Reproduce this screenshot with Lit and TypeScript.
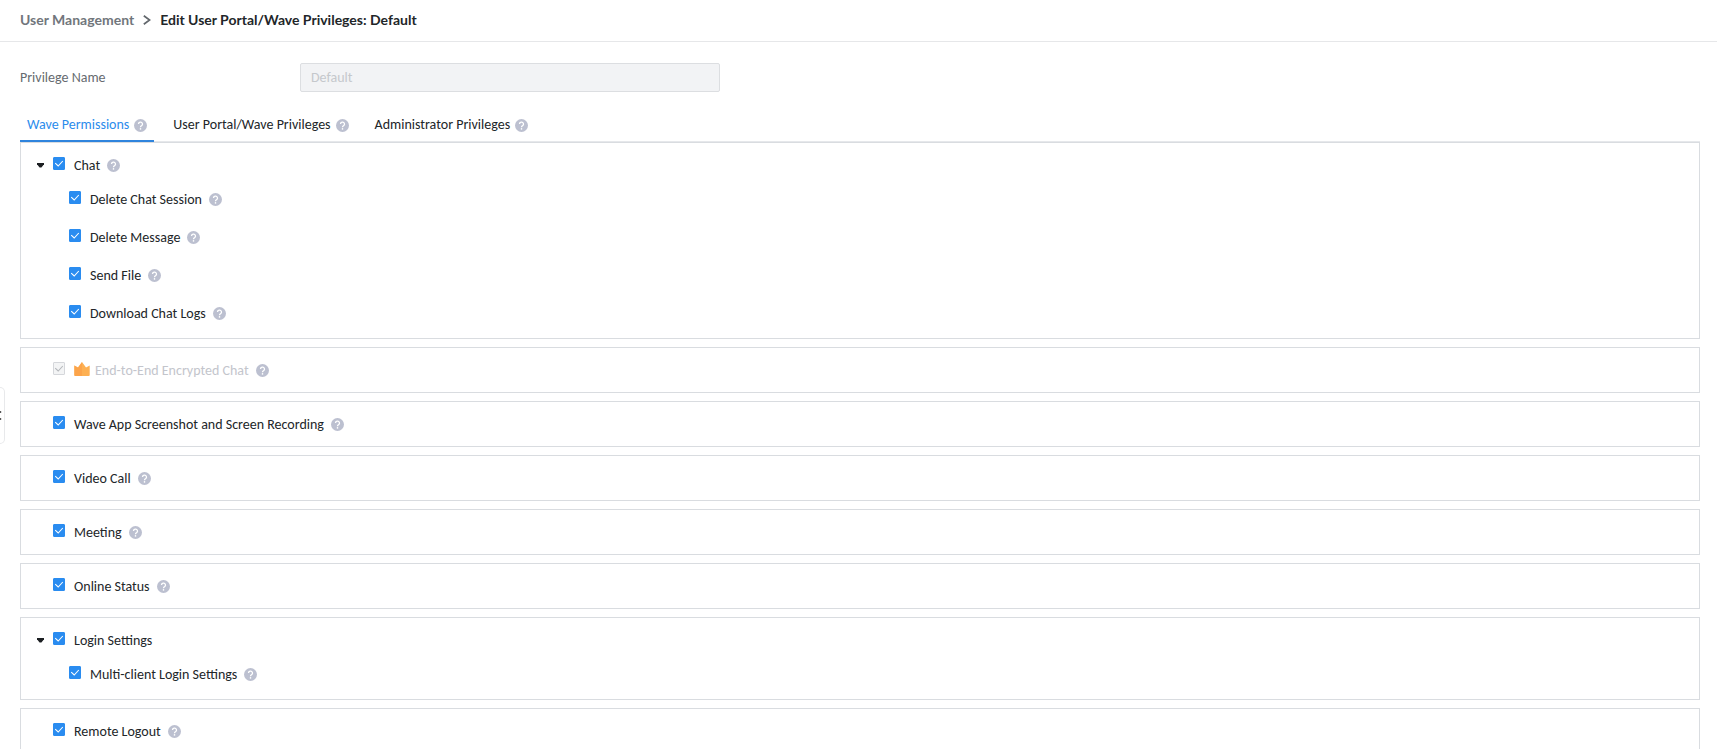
import { LitElement, html, svg, css, nothing } from "lit";
import { customElement, state } from "lit/decorators.js";

interface Permission {
  id: string;
  label: string;
  help?: boolean;
  locked?: boolean;
  children?: Permission[];
}

const PERMISSIONS: Permission[] = [
  {
    id: "chat",
    label: "Chat",
    help: true,
    children: [
      { id: "delete-session", label: "Delete Chat Session", help: true },
      { id: "delete-message", label: "Delete Message", help: true },
      { id: "send-file", label: "Send File", help: true },
      { id: "download-logs", label: "Download Chat Logs", help: true },
    ],
  },
  { id: "e2e", label: "End-to-End Encrypted Chat", help: true, locked: true },
  { id: "screenshot", label: "Wave App Screenshot and Screen Recording", help: true },
  { id: "video", label: "Video Call", help: true },
  { id: "meeting", label: "Meeting", help: true },
  { id: "online", label: "Online Status", help: true },
  {
    id: "login",
    label: "Login Settings",
    children: [{ id: "multi-client", label: "Multi-client Login Settings", help: true }],
  },
  { id: "logout", label: "Remote Logout", help: true },
];

const TABS = ["Wave Permissions", "User Portal/Wave Privileges", "Administrator Privileges"];

const helpIcon = svg`<svg class="help-icon" width="13" height="13" viewBox="0 0 13 13" aria-hidden="true">
  <circle cx="6.5" cy="6.5" r="6.5" fill="#bcc0d0"/>
  <path d="M4.5 5.1a2 2 0 1 1 3 1.7c-.7.4-1 .7-1 1.4" fill="none" stroke="#fff" stroke-width="1.3"/>
  <circle cx="6.5" cy="9.9" r=".8" fill="#fff"/>
</svg>`;

@customElement("app-root")
export class AppRoot extends LitElement {
  @state() private activeTab = 0;
  @state() private closed = new Set<string>();

  static styles = css`
    :host {
      display: block;
      height: 100vh;
      overflow: hidden;
      position: relative;
      background: #fff;
      color: #222629;
      font: 14px/20px Carlito, Lato, "Liberation Sans", sans-serif;
    }
    * { box-sizing: border-box; }
    button {
      border: 0;
      padding: 0;
      background: none;
      font: inherit;
      color: inherit;
      cursor: pointer;
    }
    svg { display: block; }
    .header {
      display: flex;
      align-items: center;
      gap: 9px;
      height: 42px;
      padding: 0 20px 2px;
      border-bottom: 1px solid #e6e7e9;
      font-family: Lato, "Liberation Sans", sans-serif;
      font-weight: 700;
    }
    .crumb { color: #71767c; text-decoration: none; }
    .title { margin: 0; font: inherit; }
    .content { padding: 21px 17px 0 20px; }
    .field { display: flex; align-items: center; }
    .field-label { width: 280px; color: #666b70; }
    .field-input {
      width: 420px;
      height: 29px;
      padding: 0 10px;
      border: 1px solid #dcdee1;
      border-radius: 2px;
      background: #f2f3f5;
      color: #c5c8cc;
      font: inherit;
    }
    .tabs {
      display: flex;
      gap: 12px;
      margin-top: 16px;
      border-bottom: 1px solid #e6e8eb;
    }
    .tab {
      display: flex;
      align-items: center;
      gap: 5px;
      height: 34px;
      padding: 2px 7px 0;
      margin-bottom: -1px;
      border-bottom: 2px solid transparent;
    }
    .tab.active { color: #2b8cec; border-color: #2f84dd; }
    .panel { display: flex; flex-direction: column; gap: 8px; }
    .card {
      padding: 7px 16px;
      border: 1px solid #d9dce0;
    }
    .card.group { padding-bottom: 6px; }
    .row { display: flex; align-items: center; height: 30px; }
    .row.child { height: 38px; padding-left: 32px; }
    .toggle { width: 16px; height: 16px; display: flex; align-items: center; }
    .check {
      appearance: none;
      width: 12px;
      height: 13px;
      margin: 0 9px 4px 0;
      border-radius: 1px;
      border: 1px solid #c8cbd0;
      background: #fff center / 10px 11px no-repeat;
    }
    .check:checked {
      border-color: #2a8cf0;
      background-color: #2a8cf0;
      background-image: url("data:image/svg+xml,%3Csvg xmlns='http://www.w3.org/2000/svg' viewBox='0 0 10 11'%3E%3Cpath d='M1.2 5.2 4.2 8 8.8 3' fill='none' stroke='%23fff' stroke-width='1.1'/%3E%3C/svg%3E");
    }
    .check:disabled {
      border-color: #d5d7db;
      background-color: #f3f4f5;
      background-image: url("data:image/svg+xml,%3Csvg xmlns='http://www.w3.org/2000/svg' viewBox='0 0 10 11'%3E%3Cpath d='M1.2 5.2 4.2 8 8.8 3' fill='none' stroke='%23b4b7bb' stroke-width='1.1'/%3E%3C/svg%3E");
    }
    .name { margin-right: 7px; padding-top: 2px; }
    .name.locked { color: #c3c5cc; }
    .crown { margin: 0 5px 2px 0; }
    .collapse {
      position: absolute;
      left: 0;
      top: 387px;
      width: 5px;
      height: 57px;
      border: 1px solid #e8e9eb;
      border-left: 0;
      border-radius: 0 6px 6px 0;
      display: flex;
      align-items: center;
    }
  `;

  private toggle(id: string) {
    const next = new Set(this.closed);
    next.has(id) ? next.delete(id) : next.add(id);
    this.closed = next;
  }

  private help(label: string) {
    return html`<button class="help" aria-label="Help: ${label}">${helpIcon}</button>`;
  }

  private row(p: Permission, child = false) {
    return html`<div class="row ${child ? "child" : ""}">
      ${child
        ? nothing
        : p.children
          ? html`<button class="toggle" aria-label="Toggle ${p.label}" @click=${() => this.toggle(p.id)}>
              <svg width="7" height="5" viewBox="0 0 7 5"><path d="M0 0h7v1.2L4.4 4.5H2.6L0 1.2z" fill="#1c1f22" /></svg>
            </button>`
          : html`<span class="toggle"></span>`}
      <input class="check" type="checkbox" id=${p.id} checked ?disabled=${p.locked} />
      ${p.locked
        ? html`<svg class="crown" width="16" height="14" viewBox="0 0 16 14" aria-hidden="true">
            <path d="M.3 3.4 4 5.6 8 0l4 5.6 3.7-2.2V13q0 .9-.9.9H1.2q-.9 0-.9-.9z" fill="#fdb052" />
            <path d="M.3 3.4 4 5.6 8 0V13.9H1.2q-.9 0-.9-.9z" fill="#fba047" opacity=".7" />
          </svg>`
        : nothing}
      <label class="name ${p.locked ? "locked" : ""}" for=${p.id}>${p.label}</label>
      ${p.help ? this.help(p.label) : nothing}
    </div>`;
  }

  render() {
    return html`
      <header class="header">
        <a class="crumb" href="#users">User Management</a>
        <svg width="8" height="10" viewBox="0 0 8 10" aria-hidden="true">
          <path d="M.8.8 6.6 5 .8 9.2" fill="none" stroke="#62676c" stroke-width="1.7" />
        </svg>
        <h1 class="title">Edit User Portal/Wave Privileges: Default</h1>
      </header>
      <main class="content">
        <div class="field">
          <label class="field-label" for="privilege-name">Privilege Name</label>
          <input class="field-input" id="privilege-name" value="Default" disabled />
        </div>
        <div class="tabs" role="tablist">
          ${TABS.map(
            (t, i) => html`<button
              class="tab ${i === this.activeTab ? "active" : ""}"
              role="tab"
              aria-selected=${i === this.activeTab}
              @click=${() => (this.activeTab = i)}
            >${t}${helpIcon}</button>`,
          )}
        </div>
        <div class="panel">
          ${PERMISSIONS.map(
            (p) => html`<section class="card ${p.children ? "group" : ""}">
              ${this.row(p)}
              ${p.children && !this.closed.has(p.id) ? p.children.map((c) => this.row(c, true)) : nothing}
            </section>`,
          )}
        </div>
      </main>
      <button class="collapse" aria-label="Collapse sidebar">
        <svg width="2" height="9" viewBox="0 0 2 9"><path d="M0 1h1.2M0 8h1.2" stroke="#222" stroke-width="1.4" /></svg>
      </button>
    `;
  }
}
